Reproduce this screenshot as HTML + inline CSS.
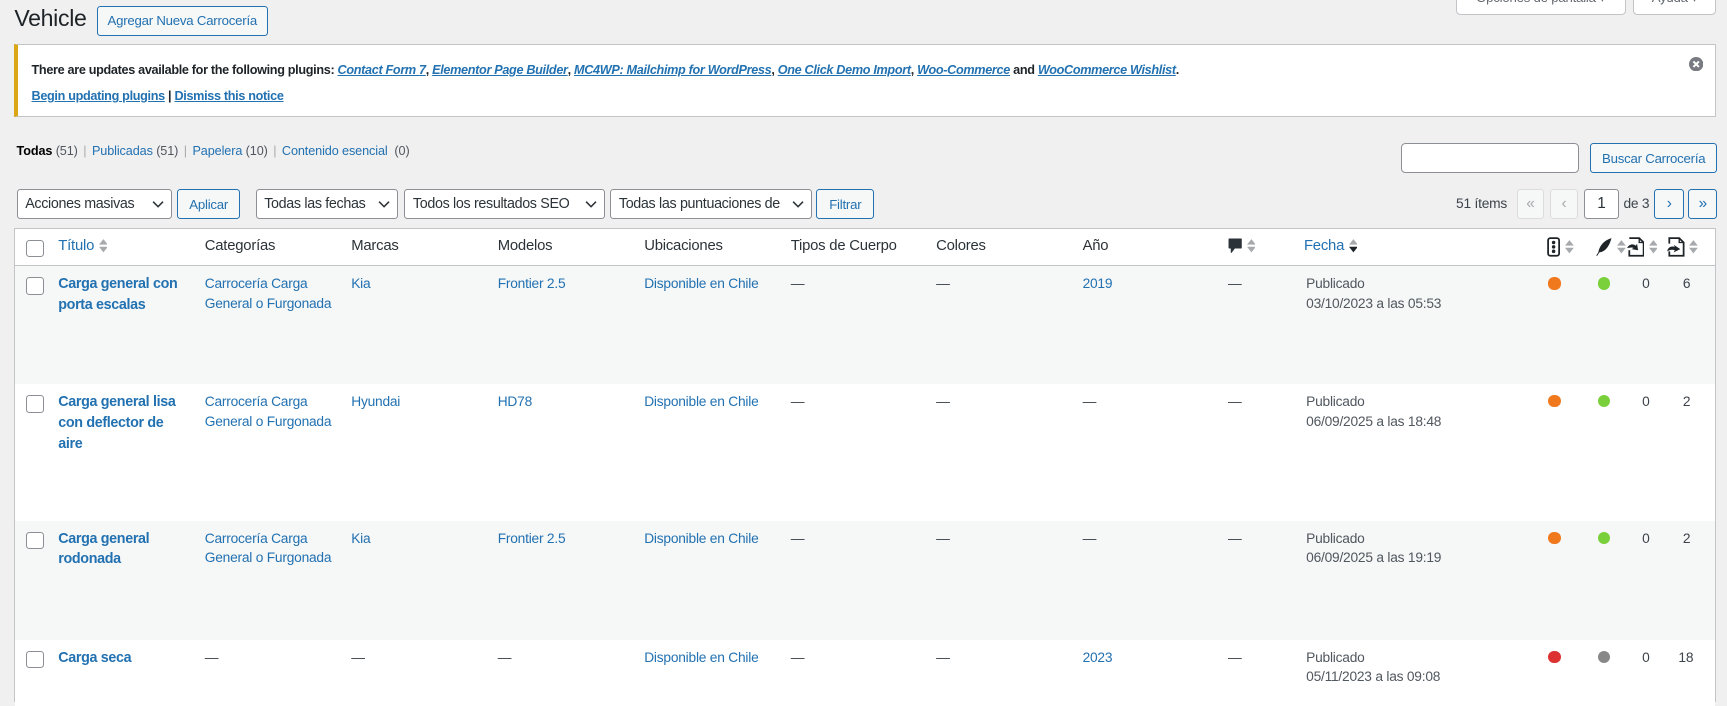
<!DOCTYPE html>
<html><head><meta charset="utf-8">
<style>
html,body{margin:0;padding:0;}
body{width:1568px;height:626px;overflow:hidden;zoom:1.10140;background:#f0f0f1;font-family:"Liberation Sans",Arial,sans-serif;font-size:12.5px;letter-spacing:-0.2px;color:#3c434a;position:relative;}
a{color:#2271b1;text-decoration:none;}
.abs{position:absolute;}
.btn{position:absolute;box-sizing:border-box;border:1px solid #2271b1;border-radius:3px;background:#f6f7f7;color:#2271b1;font-size:12px;display:flex;align-items:center;justify-content:center;white-space:nowrap;}
.sel{position:absolute;box-sizing:border-box;border:1px solid #8c8f94;border-radius:3px;background:#fff;color:#2c3338;font-size:13px;letter-spacing:-0.3px;height:27px;top:172px;padding-left:7px;display:flex;align-items:center;white-space:nowrap;overflow:hidden;}
.sel svg{position:absolute;right:6px;top:9px;background:#fff;}
.pg{position:absolute;box-sizing:border-box;top:172px;height:27px;border-radius:3px;display:flex;align-items:center;justify-content:center;font-size:14px;}
.pg.dis{border:1px solid #dcdcde;background:#f6f7f7;color:#a7aaad;}
.pg.on{border:1px solid #2271b1;background:#f6f7f7;color:#2271b1;}
.tbl{position:absolute;left:13px;top:207px;width:1545px;height:430px;border:1px solid #c3c4c7;background:#fff;box-sizing:border-box;}
.hdr{position:absolute;left:0;top:0;width:100%;height:33px;border-bottom:1px solid #c3c4c7;}
.row{position:absolute;left:0;width:100%;}
.c{position:absolute;line-height:18px;white-space:nowrap;}
.cb{position:absolute;width:14px;height:14px;border:1px solid #8c8f94;border-radius:3px;background:#fff;}
.h{position:absolute;top:7px;font-size:13.5px;color:#2c3338;line-height:18px;white-space:nowrap;}
.sort{display:inline-block;vertical-align:middle;margin-left:4px;}
.dot{position:absolute;width:11px;height:11px;border-radius:50%;}
b.t{font-weight:bold;color:#2271b1;font-size:13px;letter-spacing:-0.3px;}
.sep{color:#a7aaad;margin:0 5px;}
</style></head><body>

<div class="abs" style="left:13px;top:4px;font-size:21px;letter-spacing:-0.3px;color:#1d2327;line-height:27px;">Vehicle</div>
<div class="btn" style="left:88px;top:5px;width:155px;height:28px;">Agregar Nueva Carrocería</div>

<div class="abs" style="left:1322px;top:-14px;width:154px;height:28px;box-sizing:border-box;border:1px solid #c3c4c7;border-top:none;border-radius:0 0 4px 4px;background:#fff;color:#646970;font-size:12px;text-align:center;line-height:24px;">Opciones de pantalla ▾</div>
<div class="abs" style="left:1483px;top:-14px;width:75px;height:28px;box-sizing:border-box;border:1px solid #c3c4c7;border-top:none;border-radius:0 0 4px 4px;background:#fff;color:#646970;font-size:12px;text-align:center;line-height:24px;">Ayuda ▾</div>

<div class="abs" style="left:13px;top:40px;width:1545px;height:66px;box-sizing:border-box;background:#fff;border:1px solid #c3c4c7;border-left:4px solid #dba617;">
  <div class="abs" style="left:12px;top:16px;font-size:11.5px;letter-spacing:-0.3px;font-weight:bold;color:#1d2327;white-space:nowrap;">There are updates available for the following plugins: <a style="text-decoration:underline;font-style:italic;">Contact Form 7</a>, <a style="text-decoration:underline;font-style:italic;">Elementor Page Builder</a>, <a style="text-decoration:underline;font-style:italic;">MC4WP: Mailchimp for WordPress</a>, <a style="text-decoration:underline;font-style:italic;">One Click Demo Import</a>, <a style="text-decoration:underline;font-style:italic;">Woo-Commerce</a> and <a style="text-decoration:underline;font-style:italic;">WooCommerce Wishlist</a>.</div>
  <div class="abs" style="left:12px;top:40px;font-size:11.5px;letter-spacing:-0.3px;font-weight:bold;color:#1d2327;white-space:nowrap;"><a style="text-decoration:underline;">Begin updating plugins</a> | <a style="text-decoration:underline;">Dismiss this notice</a></div>
  <svg class="abs" style="left:1517px;top:11px" width="13" height="13" viewBox="0 0 13 13"><circle cx="6.5" cy="6.5" r="6.5" fill="#787c82"/><path d="M4 4l5 5M9 4l-5 5" stroke="#fff" stroke-width="1.8"/></svg>
</div>

<div class="abs" style="left:15px;top:130px;font-size:11.5px;letter-spacing:-0.1px;color:#50575e;white-space:nowrap;line-height:16px;"><b style="color:#000">Todas</b> (51)<span class="sep">|</span><a>Publicadas</a> (51)<span class="sep">|</span><a>Papelera</a> (10)<span class="sep">|</span><a>Contenido esencial</a> &nbsp;(0)</div>

<div class="abs" style="left:1272px;top:130px;width:162px;height:27px;box-sizing:border-box;border:1px solid #8c8f94;border-radius:4px;background:#fff;"></div>
<div class="btn" style="left:1444px;top:130px;width:115px;height:27px;">Buscar Carrocería</div>

<div class="sel" style="left:15px;width:141px;">Acciones masivas<svg width="11" height="8"><path d="M1 1.5l4.5 4.5 4.5-4.5" stroke="#2c3338" stroke-width="1.4" fill="none"/></svg></div>
<div class="btn" style="left:161px;top:172px;width:57px;height:27px;">Aplicar</div>
<div class="sel" style="left:232px;width:129px;">Todas las fechas<svg width="11" height="8"><path d="M1 1.5l4.5 4.5 4.5-4.5" stroke="#2c3338" stroke-width="1.4" fill="none"/></svg></div>
<div class="sel" style="left:367px;width:182px;">Todos los resultados SEO<svg width="11" height="8"><path d="M1 1.5l4.5 4.5 4.5-4.5" stroke="#2c3338" stroke-width="1.4" fill="none"/></svg></div>
<div class="sel" style="left:554px;width:183px;">Todas las puntuaciones de<svg width="11" height="8"><path d="M1 1.5l4.5 4.5 4.5-4.5" stroke="#2c3338" stroke-width="1.4" fill="none"/></svg></div>
<div class="btn" style="left:741px;top:172px;width:53px;height:27px;">Filtrar</div>

<div class="abs" style="left:1322px;top:178px;font-size:12.5px;color:#3c434a;">51 ítems</div>
<div class="pg dis" style="left:1377px;width:25px;">«</div>
<div class="pg dis" style="left:1407px;width:26px;">‹</div>
<div class="pg" style="left:1438px;width:32px;border:1px solid #8c8f94;background:#fff;color:#2c3338;">1</div>
<div class="abs" style="left:1474px;top:178px;font-size:12.5px;color:#3c434a;">de 3</div>
<div class="pg on" style="left:1502px;width:27px;">›</div>
<div class="pg on" style="left:1533px;width:26px;">»</div>

<div class="tbl">
 <div class="hdr">
  <div class="cb" style="left:10px;top:10px;"></div>
  <div class="h" style="left:39px;color:#2271b1;">Título<svg class="sort" width="8" height="14"><path d="M0 6L4 1 8 6z M0 8L4 13 8 8z" fill="#a7aaad"/></svg></div>
  <div class="h" style="left:172px;">Categorías</div>
  <div class="h" style="left:305px;">Marcas</div>
  <div class="h" style="left:438px;">Modelos</div>
  <div class="h" style="left:571px;">Ubicaciones</div>
  <div class="h" style="left:704px;">Tipos de Cuerpo</div>
  <div class="h" style="left:836px;">Colores</div>
  <div class="h" style="left:969px;">Año</div>
  <div class="h" style="left:1101px;"><svg width="13" height="14" style="vertical-align:middle"><path d="M1 1h11v8H6L3 13V9H1z" fill="#2c3338" stroke="#2c3338" stroke-linejoin="round"/></svg><svg class="sort" width="8" height="14"><path d="M0 6L4 1 8 6z M0 8L4 13 8 8z" fill="#a7aaad"/></svg></div>
  <div class="h" style="left:1170px;color:#2271b1;">Fecha<svg class="sort" width="8" height="14"><path d="M0 6L4 1 8 6z" fill="#a7aaad"/><path d="M0 8L4 13 8 8z" fill="#1d2327"/></svg></div>
  <div class="h" style="left:1391px;"><svg width="12" height="18" style="vertical-align:middle"><rect x="1" y="1" width="10" height="16" rx="2" fill="none" stroke="#1d2327" stroke-width="1.6"/><circle cx="6" cy="5" r="1.6" fill="#1d2327"/><circle cx="6" cy="9" r="1.6" fill="#1d2327"/><circle cx="6" cy="13" r="1.6" fill="#1d2327"/></svg><svg class="sort" width="8" height="14"><path d="M0 6L4 1 8 6z M0 8L4 13 8 8z" fill="#a7aaad"/></svg></div>
  <div class="h" style="left:1434px;"><svg width="16" height="18" style="vertical-align:middle"><path d="M15 1C8 3 4 8 3 14L1 17 2 17 4 14C10 13 13 8 15 1z" fill="#1d2327"/></svg><svg class="sort" width="8" height="14"><path d="M0 6L4 1 8 6z M0 8L4 13 8 8z" fill="#a7aaad"/></svg></div>
  <div class="h" style="left:1462px;"><svg width="17" height="18" style="vertical-align:middle"><path d="M3 1h9l4 4v12H3v-5" fill="none" stroke="#1d2327" stroke-width="1.6"/><path d="M12 1v4h4" fill="none" stroke="#1d2327" stroke-width="1.2"/><path d="M1 10c2-4 6-4 8-2l1-2 1 6-6-1 2-1c-2-1-4 0-6 0z" fill="#1d2327"/></svg><svg class="sort" width="8" height="14"><path d="M0 6L4 1 8 6z M0 8L4 13 8 8z" fill="#a7aaad"/></svg></div>
  <div class="h" style="left:1499px;"><svg width="17" height="18" style="vertical-align:middle"><path d="M3 6V1h9l4 4v12H3v-4" fill="none" stroke="#1d2327" stroke-width="1.6"/><path d="M12 1v4h4" fill="none" stroke="#1d2327" stroke-width="1.2"/><path d="M1 13c1-4 4-5 7-4l-1-2 6 4-6 3 1-2c-3-1-5 0-7 1z" fill="#1d2327"/></svg><svg class="sort" width="8" height="14"><path d="M0 6L4 1 8 6z M0 8L4 13 8 8z" fill="#a7aaad"/></svg></div>
 </div>

 <div class="row" style="top:34px;height:107px;background:#f6f7f7;">
  <div class="cb" style="left:10px;top:10px;"></div>
  <div class="c" style="left:39px;top:7px;"><b class="t">Carga general con<br>porta escalas</b></div>
  <div class="c" style="left:172px;top:7px;"><a>Carrocería Carga<br>General o Furgonada</a></div>
  <div class="c" style="left:305px;top:7px;"><a>Kia</a></div>
  <div class="c" style="left:438px;top:7px;"><a>Frontier 2.5</a></div>
  <div class="c" style="left:571px;top:7px;"><a>Disponible en Chile</a></div>
  <div class="c" style="left:704px;top:7px;">—</div>
  <div class="c" style="left:836px;top:7px;">—</div>
  <div class="c" style="left:969px;top:7px;"><a>2019</a></div>
  <div class="c" style="left:1101px;top:7px;">—</div>
  <div class="c" style="left:1172px;top:7px;color:#50575e;">Publicado<br>03/10/2023 a las 05:53</div>
  <div class="dot" style="left:1392px;top:10px;background:#f0791e;"></div>
  <div class="dot" style="left:1437px;top:10px;background:#7ad03a;"></div>
  <div class="c" style="left:1477px;top:7px;">0</div>
  <div class="c" style="left:1514px;top:7px;">6</div>
 </div>

 <div class="row" style="top:141px;height:124px;background:#fff;">
  <div class="cb" style="left:10px;top:10px;"></div>
  <div class="c" style="left:39px;top:7px;"><b class="t">Carga general lisa<br>con deflector de<br>aire</b></div>
  <div class="c" style="left:172px;top:7px;"><a>Carrocería Carga<br>General o Furgonada</a></div>
  <div class="c" style="left:305px;top:7px;"><a>Hyundai</a></div>
  <div class="c" style="left:438px;top:7px;"><a>HD78</a></div>
  <div class="c" style="left:571px;top:7px;"><a>Disponible en Chile</a></div>
  <div class="c" style="left:704px;top:7px;">—</div>
  <div class="c" style="left:836px;top:7px;">—</div>
  <div class="c" style="left:969px;top:7px;">—</div>
  <div class="c" style="left:1101px;top:7px;">—</div>
  <div class="c" style="left:1172px;top:7px;color:#50575e;">Publicado<br>06/09/2025 a las 18:48</div>
  <div class="dot" style="left:1392px;top:10px;background:#f0791e;"></div>
  <div class="dot" style="left:1437px;top:10px;background:#7ad03a;"></div>
  <div class="c" style="left:1477px;top:7px;">0</div>
  <div class="c" style="left:1514px;top:7px;">2</div>
 </div>

 <div class="row" style="top:265px;height:108px;background:#f6f7f7;">
  <div class="cb" style="left:10px;top:10px;"></div>
  <div class="c" style="left:39px;top:7px;"><b class="t">Carga general<br>rodonada</b></div>
  <div class="c" style="left:172px;top:7px;"><a>Carrocería Carga<br>General o Furgonada</a></div>
  <div class="c" style="left:305px;top:7px;"><a>Kia</a></div>
  <div class="c" style="left:438px;top:7px;"><a>Frontier 2.5</a></div>
  <div class="c" style="left:571px;top:7px;"><a>Disponible en Chile</a></div>
  <div class="c" style="left:704px;top:7px;">—</div>
  <div class="c" style="left:836px;top:7px;">—</div>
  <div class="c" style="left:969px;top:7px;">—</div>
  <div class="c" style="left:1101px;top:7px;">—</div>
  <div class="c" style="left:1172px;top:7px;color:#50575e;">Publicado<br>06/09/2025 a las 19:19</div>
  <div class="dot" style="left:1392px;top:10px;background:#f0791e;"></div>
  <div class="dot" style="left:1437px;top:10px;background:#7ad03a;"></div>
  <div class="c" style="left:1477px;top:7px;">0</div>
  <div class="c" style="left:1514px;top:7px;">2</div>
 </div>

 <div class="row" style="top:373px;height:60px;background:#fff;">
  <div class="cb" style="left:10px;top:10px;"></div>
  <div class="c" style="left:39px;top:7px;"><b class="t">Carga seca</b></div>
  <div class="c" style="left:172px;top:7px;">—</div>
  <div class="c" style="left:305px;top:7px;">—</div>
  <div class="c" style="left:438px;top:7px;">—</div>
  <div class="c" style="left:571px;top:7px;"><a>Disponible en Chile</a></div>
  <div class="c" style="left:704px;top:7px;">—</div>
  <div class="c" style="left:836px;top:7px;">—</div>
  <div class="c" style="left:969px;top:7px;"><a>2023</a></div>
  <div class="c" style="left:1101px;top:7px;">—</div>
  <div class="c" style="left:1172px;top:7px;color:#50575e;">Publicado<br>05/11/2023 a las 09:08</div>
  <div class="dot" style="left:1392px;top:10px;background:#dc3232;"></div>
  <div class="dot" style="left:1437px;top:10px;background:#888;"></div>
  <div class="c" style="left:1477px;top:7px;">0</div>
  <div class="c" style="left:1510px;top:7px;">18</div>
 </div>
</div>
</body></html>
